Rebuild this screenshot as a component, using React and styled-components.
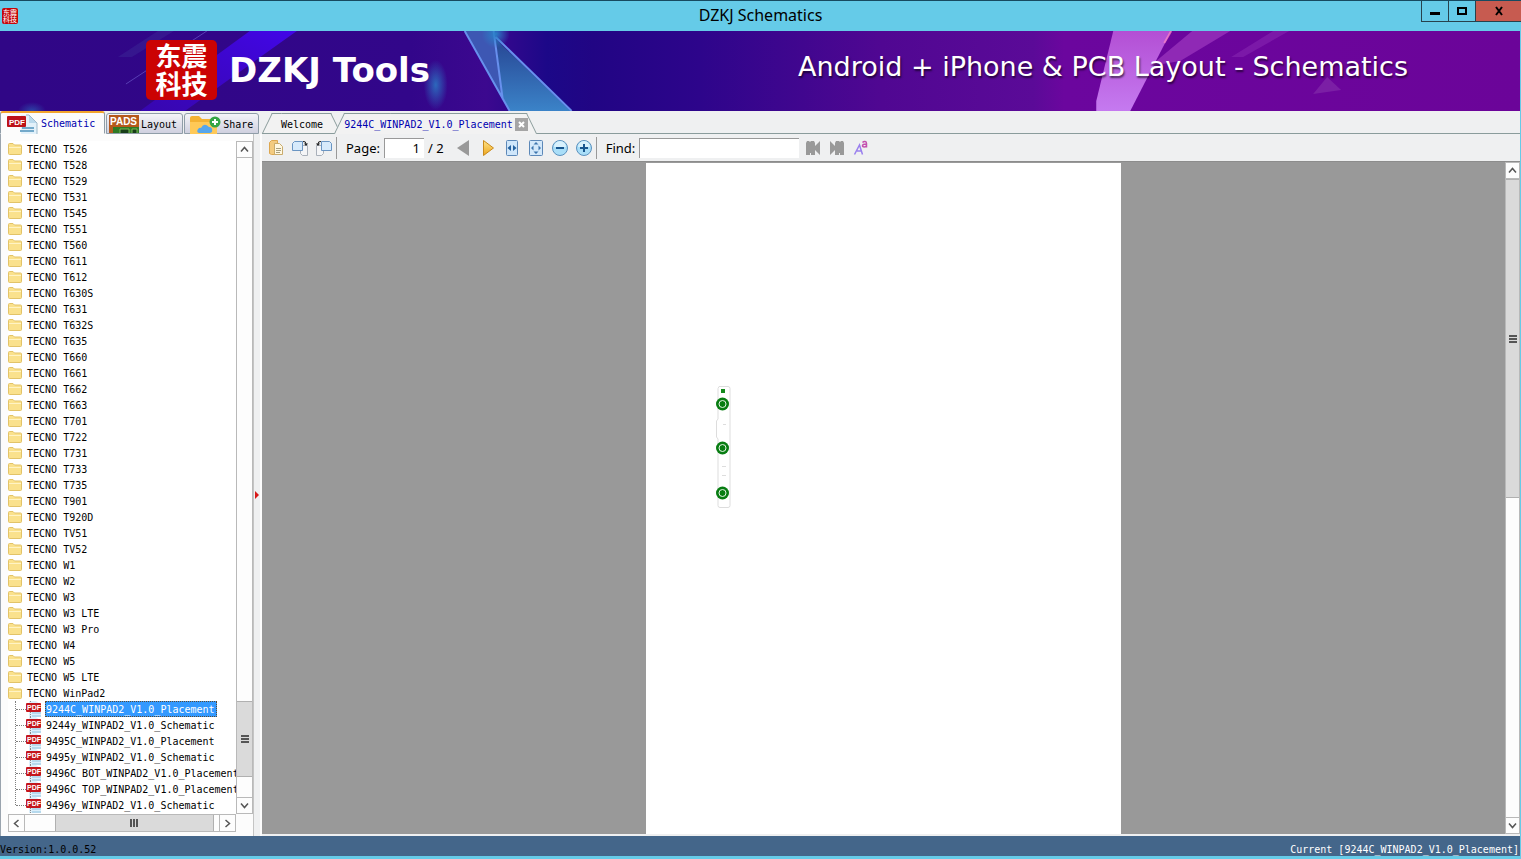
import React from "react"
import styled, { createGlobalStyle } from "styled-components"

const folders = [
  "T526", "T528", "T529", "T531", "T545", "T551", "T560", "T611", "T612",
  "T630S", "T631", "T632S", "T635", "T660", "T661", "T662", "T663", "T701",
  "T722", "T731", "T733", "T735", "T901", "T920D", "TV51", "TV52", "W1", "W2",
  "W3", "W3 LTE", "W3 Pro", "W4", "W5", "W5 LTE", "WinPad2",
]

const files = [
  "9244C_WINPAD2_V1.0_Placement",
  "9244y_WINPAD2_V1.0_Schematic",
  "9495C_WINPAD2_V1.0_Placement",
  "9495y_WINPAD2_V1.0_Schematic",
  "9496C BOT_WINPAD2_V1.0_Placement",
  "9496C TOP_WINPAD2_V1.0_Placement",
  "9496y_WINPAD2_V1.0_Schematic",
]

const current = files[0]

const App = () => (
  <>
    <GlobalStyle />
    <Window>
      <TitleBar>
        <AppIcon>
          <span>东震</span>
          <span>科技</span>
        </AppIcon>
        <WindowTitle>DZKJ Schematics</WindowTitle>
        <WindowControls>
          <ControlButton aria-label="Minimize">
            <svg width="12" height="10">
              <rect x="1" y="6" width="10" height="3" />
            </svg>
          </ControlButton>
          <ControlButton aria-label="Maximize">
            <svg width="12" height="10">
              <path d="M2 2h8v6H2z" fill="none" stroke="#000" strokeWidth="2" />
            </svg>
          </ControlButton>
          <ControlButton aria-label="Close" $close>
            <svg width="10" height="10">
              <path d="M2 1l6 8M8 1L2 9" stroke="#000" strokeWidth="2" />
            </svg>
          </ControlButton>
        </WindowControls>
      </TitleBar>
      <Frame>
        <Banner>
          <BannerArt />
          <Logo>
            <span>东震</span>
            <span>科技</span>
          </Logo>
          <Brand>DZKJ Tools</Brand>
          <Slogan>Android + iPhone &amp; PCB Layout - Schematics</Slogan>
        </Banner>
        <Main>
          <Sidebar />
          <Viewer />
        </Main>
        <StatusBar>
          <Version>Version:1.0.0.52</Version>
          <span>Current [{current}]</span>
        </StatusBar>
      </Frame>
    </Window>
  </>
)

export default App

const Sidebar = () => (
  <SidePanel>
    <SideTabs>
      <SideTab $active>
        <PdfTabIcon />
        Schematic
      </SideTab>
      <SideTab>
        <PadsIcon />
        Layout
      </SideTab>
      <SideTab>
        <ShareIcon />
        Share
      </SideTab>
    </SideTabs>
    <SideBody>
      <TreeArea>
        <Tree>
          {folders.map(name => (
            <FolderRow key={name}>
              <FolderIcon />
              TECNO {name}
            </FolderRow>
          ))}
          <FileList>
            {files.map(name => (
              <FileRow key={name}>
                <PdfIcon />
                <FileName $selected={name === current}>{name}</FileName>
              </FileRow>
            ))}
          </FileList>
          <FolderRow>
            <FolderIcon />
          </FolderRow>
        </Tree>
        <ScrollBar before={547} thumb={75} after={20} />
        <ScrollBar horizontal before={30} thumb={160} after={5} />
      </TreeArea>
      <Splitter>
        <svg width="5" height="8">
          <path d="M1 0l4 4-4 4z" fill="#d81818" />
        </svg>
      </Splitter>
    </SideBody>
  </SidePanel>
)

const Viewer = () => (
  <ViewerPanel>
    <DocTabs>
      <DocTab>Welcome</DocTab>
      <DocTab $active>
        {current}
        <CloseTab aria-label="Close tab">
          <svg width="7" height="7">
            <path d="M1 1l5 5M6 1L1 6" stroke="#fff" strokeWidth="2" />
          </svg>
        </CloseTab>
      </DocTab>
    </DocTabs>
    <Toolbar>
      <Tool aria-label="Open">
        <svg width="16" height="16">
          <path d="M1.500 2.500l2-2H9.500v14h-6l-2-1z" fill="#f3cb80" stroke="#dda750" />
          <path d="M6.500 3.500h5l3 3v8h-8z" fill="#fff8e2" stroke="#c9ab6c" />
          <path d="M8 8.500h5M8 10.500h5M8 12.500h4" stroke="#a8a080" />
        </svg>
      </Tool>
      <Tool aria-label="Rotate right">
        <RotateIcon />
      </Tool>
      <Tool aria-label="Rotate left">
        <RotateIcon flip />
      </Tool>
      <Separator />
      <Label htmlFor="page">Page:</Label>
      <PageInput id="page" defaultValue="1" />
      <PageCount>/ 2</PageCount>
      <Tool aria-label="Previous page">
        <svg width="14" height="16">
          <path d="M12 0v16L0 8z" fill="#999" />
        </svg>
      </Tool>
      <Tool aria-label="Next page">
        <svg width="14" height="16">
          <path d="M2.500 .5v15l10-7.500z" fill="url(#gold)" stroke="#c98a1c" />
          <defs>
            <linearGradient id="gold" x2="0" y2="1">
              <stop stopColor="#ffe58a" />
              <stop offset="1" stopColor="#eca51d" />
            </linearGradient>
          </defs>
        </svg>
      </Tool>
      <Tool aria-label="Fit width">
        <svg width="14" height="16">
          <rect x="1.500" y=".5" width="11" height="15" rx="1" fill="#cfe6fa" stroke="#5c88b8" />
          <path d="M6 5v6L2.500 8zM8 5v6l3.500-3z" fill="#25629f" />
        </svg>
      </Tool>
      <Tool aria-label="Fit page">
        <svg width="14" height="16">
          <rect x=".5" y=".5" width="13" height="15" rx="1" fill="#d3e8fa" stroke="#5c88b8" />
          <path d="M7 2l2.500 2.500h-5zM7 14l2.500-2.500h-5zM2 8l2.500-2.500v5zM12 8L9.500 5.500v5z" fill="#3d75ad" />
        </svg>
      </Tool>
      <Tool aria-label="Zoom out">
        <ZoomIcon d="M4 8h8" />
      </Tool>
      <Tool aria-label="Zoom in">
        <ZoomIcon d="M4 8h8M8 4v8" />
      </Tool>
      <Separator />
      <Label htmlFor="find">Find:</Label>
      <FindInput id="find" />
      <Tool aria-label="Find previous">
        <BinocularIcon />
      </Tool>
      <Tool aria-label="Find next">
        <BinocularIcon flip />
      </Tool>
      <Tool aria-label="Match case">
        <svg width="16" height="16">
          <path d="M1.500 14.500L6.500 5l3 9.500M4 11h5" fill="none" stroke="#9a80ee" strokeWidth="1.500" />
          <path d="M9.500 2.500C11 1 13.500 1.200 13.500 3.500v4M13.500 4c-2 0-4 0-4 1.700s3 1.600 4 0" fill="none" stroke="#c44fae" strokeWidth="1.500" />
        </svg>
      </Tool>
    </Toolbar>
    <Canvas>
      <Desk>
        <Page>
          <Board />
        </Page>
      </Desk>
      <ScrollBar slim before={0} thumb={320} after={322} />
    </Canvas>
  </ViewerPanel>
)

const ScrollBar = ({ horizontal, slim, before, thumb, after }) => (
  <Bar $horizontal={horizontal} $slim={slim}>
    <Arrow $horizontal={horizontal} aria-label={horizontal ? "Scroll left" : "Scroll up"}>
      <svg width="9" height="9">
        <path d={horizontal ? "M6.500 1l-4 3.500 4 3.500" : "M1 6.500l3.500-4 3.500 4"} />
      </svg>
    </Arrow>
    <Gap $size={before} />
    <Thumb $size={thumb} $horizontal={horizontal}>
      <svg width="8" height="8">
        <path d={horizontal ? "M1 0v8M4 0v8M7 0v8" : "M0 1h8M0 4h8M0 7h8"} stroke="#555" strokeWidth="2" />
      </svg>
    </Thumb>
    <Gap $size={after} />
    <Arrow $horizontal={horizontal} $end aria-label={horizontal ? "Scroll right" : "Scroll down"}>
      <svg width="9" height="9">
        <path d={horizontal ? "M2.500 1l4 3.500-4 3.500" : "M1 2.500l3.500 4 3.500-4"} />
      </svg>
    </Arrow>
  </Bar>
)

const BannerArt = () => (
  <Art viewBox="0 0 1521 80" preserveAspectRatio="none" aria-hidden="true">
    <defs>
      <linearGradient id="base">
        <stop stopColor="#300686" />
        <stop offset=".27" stopColor="#32068a" />
        <stop offset=".32" stopColor="#3c088f" />
        <stop offset=".36" stopColor="#1c0888" />
        <stop offset=".39" stopColor="#210584" />
        <stop offset=".46" stopColor="#2d058b" />
        <stop offset=".58" stopColor="#500792" />
        <stop offset=".68" stopColor="#5b0a98" />
        <stop offset=".7" stopColor="#6b069e" />
        <stop offset="1" stopColor="#6b0499" />
      </linearGradient>
      <linearGradient id="beam" x1="1" y1="0" x2="0" y2="1">
        <stop stopColor="#4206e8" />
        <stop offset="1" stopColor="#3a06c0" stopOpacity=".7" />
      </linearGradient>
      <linearGradient id="shard" x2="0" y2="1">
        <stop stopColor="#274694" />
        <stop offset="1" stopColor="#3b83c8" />
      </linearGradient>
      <linearGradient id="pink" x2="0" y2="1">
        <stop stopColor="#b34fd4" />
        <stop offset="1" stopColor="#c57af0" />
      </linearGradient>
      <radialGradient id="glow">
        <stop stopColor="#2a80c8" />
        <stop offset="1" stopColor="#2a80c8" stopOpacity="0" />
      </radialGradient>
    </defs>
    <rect width="1521" height="80" fill="url(#base)" />
    <path d="M250 0h47L185 80h-45z" fill="url(#beam)" />
    <path d="M158 0h16l-42 26h-14z" fill="#433da0" opacity=".3" />
    <path d="M207 0L126 53" stroke="#6a56c8" opacity=".7" />
    <ellipse cx="32" cy="80" rx="14" ry="9" fill="url(#glow)" opacity=".5" />
    <ellipse cx="436" cy="54" rx="12" ry="25" fill="url(#glow)" opacity=".8" />
    <path d="M465 0h29l9 68z" fill="#3d57b3" />
    <path d="M496 8l75 72h-61l-7-12z" fill="url(#shard)" />
    <path d="M465 0l45 80M494 0l9 68M496 6l76 74" fill="none" stroke="#6790ed" strokeWidth="2" />
    <circle cx="496" cy="3" r="14" fill="url(#glow)" />
    <path d="M1114 0h58l-41 80h-34v-10z" fill="url(#pink)" />
    <path d="M1193 0h38l-50 30-30 5z" fill="#9b35bd" opacity=".75" />
    <path d="M1274 0h16l-46 26h-12z" fill="#9030b7" opacity=".45" />
    <path d="M1172 0l-7 12" stroke="#ff85c7" strokeWidth="2" opacity=".7" />
    <path d="M1328 46l14 13-28 4z" fill="#8630ac" opacity=".6" />
  </Art>
)

const FolderIcon = () => (
  <svg width="14" height="12">
    <path d="M.5 1.500q0-1 1-1h3.500l1.500 1.500h6q1 0 1 1v7.500q0 1-1 1h-11q-1 0-1-1z" fill="#fae18c" stroke="#e2c368" />
    <path d="M1 4h12v1H1z" fill="#fff3c4" />
  </svg>
)

const PdfIcon = () => (
  <svg width="16" height="16">
    <path d="M3 0h7l5 4v12H3z" fill="#dceffb" />
    <path d="M6 12h9M6 15h9" stroke="#8fc3df" />
    <path d="M4.500 0v2M4.500 11v5" stroke="#888" strokeDasharray="1 1" />
    <rect y="2" width="15" height="9" rx="1" fill="#c4161c" />
    <text x="1" y="9" fontSize="7" fontWeight="bold" fill="#fff" fontFamily="Liberation Sans, sans-serif">PDF</text>
  </svg>
)

const PdfTabIcon = () => (
  <svg width="32" height="20">
    <path d="M14 1h8l8 8v11H14z" fill="#e2f1fa" />
    <path d="M22 1v8h8z" fill="#b9d9ec" />
    <path d="M19 1h3l8 8v11" fill="none" stroke="#9db9cb" />
    <path d="M15 14h12M13 17h14" stroke="#73a9ca" strokeWidth="2" />
    <rect y="2" width="19" height="11" rx="1" fill="#bd1218" />
    <text x="2" y="11" fontSize="8" fontWeight="bold" fill="#fff" fontFamily="Liberation Sans, sans-serif">PDF</text>
  </svg>
)

const PadsIcon = () => (
  <svg width="30" height="18">
    <rect width="30" height="18" fill="#b5591c" />
    <text x="1" y="10" fontSize="10" fontWeight="bold" fill="#fff" fontFamily="Liberation Sans, sans-serif">PADS</text>
    <rect x="4" y="12" width="26" height="6" fill="#2f7a25" />
    <path d="M11 18v-4h9v4M23 18v-4h5v4" fill="#173d18" stroke="#79b955" />
  </svg>
)

const ShareIcon = () => (
  <svg width="34" height="19">
    <path d="M3 3q0-2 2-2h7l3 3h13q2 0 2 2v13H3z" fill="#f4b233" />
    <path d="M3 7h27v12H3z" fill="#ffc957" />
    <path d="M12 18q-3-1-1-4 2-2 3-1 3-6 8-1 4 0 3 5l-2 1z" fill="#57a6ec" />
    <circle cx="28" cy="7" r="5.500" fill="#35a544" />
    <path d="M28 4v6M25 7h6" stroke="#fff" strokeWidth="2" />
  </svg>
)

const RotateIcon = ({ flip }) => (
  <svg width="16" height="16">
    <g transform={flip ? "translate(16 0) scale(-1 1)" : undefined}>
      <path d="M8.500 5.500h7v10h-5l-2-2z" fill="#f4f5f7" stroke="#a9b0ba" />
      <path d="M.5 3.500l2-2h8v9H.5z" fill="#d7eafb" stroke="#6a95c3" />
      <path d="M11 1.500q3-.5 3 2.500" fill="none" stroke="#222" />
      <path d="M12 3.500h4l-2 2.500z" fill="#222" />
    </g>
  </svg>
)

const ZoomIcon = ({ d }) => (
  <svg width="16" height="16">
    <circle cx="8" cy="8" r="7.500" fill="#a9def8" stroke="#5b91be" />
    <path d="M2 7a6 6 0 0 1 12 0z" fill="#d8f1fd" />
    <path d={d} stroke="#17568f" strokeWidth="2" />
  </svg>
)

const BinocularIcon = ({ flip }) => (
  <svg width="16" height="16">
    <g transform={flip ? "translate(16 0) scale(-1 1)" : undefined} fill="#999">
      <path d="M1 3l1-2h2l1 1 1-1h3l1 2v3l5-5v14l-5-5v5H6v-2H5v2H1z" />
    </g>
  </svg>
)

const Board = () => (
  <svg width="15" height="123">
    <path d="M3 .5h9q2 0 2 2v117q0 2-2 2H4q-2 0-2-2V53L.5 51V35L2 33V2.500z" fill="none" stroke="#ddd" />
    <rect x="5" y="3" width="4" height="4" fill="#138a1c" />
    <path d="M7 38.500h3M6 80.500h4M6 89.500h4" stroke="#ddd" />
    {[18, 62, 107].map(y => (
      <g key={y}>
        <circle cx="6.500" cy={y} r="6.500" fill="#087d12" />
        <circle cx="6.500" cy={y} r="3.500" fill="none" stroke="#e6f5e6" />
      </g>
    ))}
  </svg>
)

const GlobalStyle = createGlobalStyle`
  * {
    box-sizing: border-box;
  }

  body {
    margin: 0;
    font-family: "DejaVu Sans Mono", monospace;
    font-size: 10px;
    color: #000;
  }

  button,
  input {
    margin: 0;
    padding: 0;
    border: 0;
    background: none;
    font: inherit;
    color: inherit;
  }

  svg {
    display: block;
    flex: none;
  }
`

const Window = styled.div`
  display: flex;
  flex-direction: column;
  height: 100vh;
  background: #65cbe8;
`

const TitleBar = styled.header`
  display: grid;
  grid-template-columns: 1fr auto 1fr;
  align-items: center;
  height: 31px;
  border-top: 1px solid #174a60;
`

const AppIcon = styled.div`
  display: flex;
  flex-direction: column;
  justify-content: center;
  width: 16px;
  height: 16px;
  margin-left: 2px;
  border-radius: 2px;
  background: #c4060a;
  color: #fff;
  font: 7px/7px "Noto Sans CJK SC", sans-serif;
  text-align: center;
`

const WindowTitle = styled.h1`
  margin: 0;
  padding-bottom: 2px;
  font: 16px/20px "Noto Sans", sans-serif;
`

const WindowControls = styled.div`
  display: flex;
  align-self: start;
  justify-content: flex-end;
`

const ControlButton = styled.button`
  display: flex;
  align-items: center;
  justify-content: center;
  width: ${({ $close }) => ($close ? 46 : 27)}px;
  height: 21px;
  border: solid #27424d;
  border-width: 0 0 1px 1px;
  background: ${({ $close }) => ($close ? "#c75b50" : "transparent")};
`

const Frame = styled.div`
  display: flex;
  flex: 1;
  flex-direction: column;
  min-height: 0;
  margin: 0 1px 3px 0;
`

const Banner = styled.div`
  position: relative;
  display: flex;
  align-items: center;
  height: 80px;
  padding: 0 112px 2px 146px;
  overflow: hidden;
  color: #fff;

  > * {
    position: relative;
  }
`

const Art = styled.svg`
  && {
    position: absolute;
    inset: 0;
    width: 100%;
    height: 100%;
  }
`

const Logo = styled.div`
  display: flex;
  flex-direction: column;
  width: 71px;
  height: 60px;
  padding-top: 1px;
  border-radius: 5px;
  background: #cb0303;
  font: bold 26px/28px "Noto Sans CJK SC", sans-serif;
  text-align: center;
`

const Brand = styled.div`
  margin-left: 12px;
  font: bold 34px/40px "DejaVu Sans", sans-serif;
  white-space: nowrap;
`

const Slogan = styled.div`
  margin-left: auto;
  padding-bottom: 6px;
  font: 27px/36px "DejaVu Sans", sans-serif;
  text-shadow: 1px 2px 2px rgba(0, 0, 0, 0.6);
  white-space: nowrap;
`

const Main = styled.main`
  display: flex;
  flex: 1;
  min-height: 0;
  background: #eff0f1;
`

const SidePanel = styled.aside`
  display: flex;
  flex: none;
  flex-direction: column;
  width: 262px;
`

const SideTabs = styled.nav`
  display: flex;
  align-items: flex-end;
  gap: 1px;
  height: 23px;
`

const SideTab = styled.button`
  display: flex;
  align-items: center;
  gap: 2px;
  height: ${({ $active }) => ($active ? 23 : 21)}px;
  padding: 1px 5px 0 2px;
  border: 1px solid #8f9da8;
  border-bottom-color: ${({ $active }) => ($active ? "#fcfcfc" : "#8f9da8")};
  border-radius: 3px 3px 0 0;
  background: ${({ $active }) => ($active ? "#fcfcfc" : "linear-gradient(#f4f4f8, #cfd0df)")};
  ${({ $active }) =>
    $active &&
    `
    width: 105px;
    padding-left: 6px;
    border-top: 2px solid #f2a42c;
    color: #0000b0;
  `}
`

const SideBody = styled.div`
  display: flex;
  flex: 1;
  min-height: 0;
  border-left: 1px solid #9aa4ae;
  background: #fcfcfc;
`

const TreeArea = styled.div`
  display: grid;
  flex: 1;
  grid-template: minmax(0, 1fr) 18px / minmax(0, 1fr) 17px;
  padding: 7px 0 4px 7px;
  border-right: 1px solid #c4c4c4;
`

const Tree = styled.div`
  overflow: hidden;
  background: #fff;
`

const FolderRow = styled.div`
  display: flex;
  align-items: center;
  gap: 5px;
  height: 16px;
`

const FileList = styled.div`
  position: relative;
  padding-left: 18px;

  &::before {
    content: "";
    position: absolute;
    top: 0;
    bottom: 8px;
    left: 7px;
    border-left: 1px dotted #808080;
  }
`

const FileRow = styled.div`
  position: relative;
  display: flex;
  align-items: center;
  gap: 3px;
  height: 16px;

  &::before {
    content: "";
    position: absolute;
    top: 8px;
    left: -10px;
    width: 10px;
    border-top: 1px dotted #808080;
  }
`

const FileName = styled.span`
  flex: none;
  height: 16px;
  padding: 1px 1px 0 0;
  border: 1px dotted ${({ $selected }) => ($selected ? "#5c4a30" : "transparent")};
  background: ${({ $selected }) => ($selected ? "#3399ff" : "none")};
  color: ${({ $selected }) => ($selected ? "#fff" : "#000")};
  line-height: 14px;
  white-space: nowrap;
`

const Splitter = styled.div`
  display: flex;
  align-items: center;
  width: 8px;
  padding-top: 20px;
  border-right: 2px solid #fcfcfc;
  background: #eff0f1;
`

const Bar = styled.div`
  display: flex;
  flex-direction: ${({ $horizontal }) => ($horizontal ? "row" : "column")};
  ${({ $horizontal, $slim }) =>
    $horizontal ? "height: 18px;" : `width: ${$slim ? 15 : 17}px; flex: none;`}
  border: 1px solid #b9b9b9;
  background: #fdfdfd;
`

const Arrow = styled.button`
  display: flex;
  flex: none;
  align-items: center;
  justify-content: center;
  ${({ $horizontal }) => ($horizontal ? "width: 16px;" : "height: 16px;")}
  border: 0 solid #b9b9b9;
  ${({ $horizontal, $end }) =>
    `border-${$horizontal ? ($end ? "left" : "right") : $end ? "top" : "bottom"}-width: 1px;`}

  path {
    fill: none;
    stroke: #555;
    stroke-width: 1.5;
  }
`

const Gap = styled.div`
  flex: ${({ $size }) => $size} 0 0;
`

const Thumb = styled.div`
  display: flex;
  flex: ${({ $size }) => $size} 0 0;
  align-items: center;
  justify-content: center;
  border: solid #b0b0b0;
  border-width: ${({ $horizontal }) => ($horizontal ? "0 1px" : "1px 0")};
  background: #dadada;
`

const ViewerPanel = styled.section`
  display: flex;
  flex: 1;
  flex-direction: column;
  min-width: 0;
`

const DocTabs = styled.nav`
  display: flex;
  height: 23px;
  padding-top: 2px;
  border-bottom: 1px solid #8a9c9c;
`

const DocTab = styled.button`
  position: relative;
  z-index: 0;
  display: flex;
  align-items: center;
  gap: 2px;
  height: 20px;
  padding: 2px 18px 0 19px;
  white-space: nowrap;

  &::before,
  &::after {
    content: "";
    position: absolute;
    z-index: -1;
    top: 0;
    bottom: 0;
    border: 0 solid #8a9c9c;
    border-top-width: 1px;
    background: #f2f2f2;
  }

  &::before {
    left: 5px;
    right: 30%;
    border-left-width: 1px;
    transform: skewX(-26deg);
  }

  &::after {
    left: 30%;
    right: 5px;
    border-right-width: 1px;
    transform: skewX(26deg);
  }

  ${({ $active }) =>
    $active &&
    `
    z-index: 1;
    height: 21px;
    margin-left: -7px;
    padding: 2px 9px 0 10px;
    color: #0000b0;
  `}
`

const CloseTab = styled.span`
  display: flex;
  align-items: center;
  justify-content: center;
  width: 13px;
  height: 13px;
  background: #a5a5a5;
`

const Toolbar = styled.div`
  display: flex;
  align-items: center;
  height: 28px;
  padding-left: 2px;
  border-bottom: 1px solid #8c8c8c;
  font: 13px/20px "Noto Sans", sans-serif;
`

const Tool = styled.button`
  display: flex;
  align-items: center;
  justify-content: center;
  width: 24px;
  height: 24px;
`

const Separator = styled.div`
  width: 1px;
  height: 22px;
  margin-right: 9px;
  background: #999;
`

const Label = styled.label`
  flex: none;
`

const PageInput = styled.input`
  width: 40px;
  height: 20px;
  margin-left: 4px;
  padding-right: 4px;
  border: solid #999;
  border-width: 1px 0 0 1px;
  background: #fff;
  text-align: right;
`

const PageCount = styled.span`
  margin: 0 8px 0 4px;
`

const FindInput = styled.input`
  width: 160px;
  height: 20px;
  margin: 0 2px 0 4px;
  border: solid #999;
  border-width: 1px 0 0 1px;
  background: #fff;
`

const Canvas = styled.div`
  display: flex;
  flex: 1;
  min-height: 0;
  margin-bottom: 2px;
`

const Desk = styled.div`
  display: flex;
  flex: 1;
  justify-content: center;
  min-width: 0;
  padding-top: 1px;
  background: #999;
`

const Page = styled.div`
  width: 475px;
  padding: 223px 70px 0;
  background: #fff;
`

const StatusBar = styled.footer`
  display: flex;
  align-items: flex-end;
  justify-content: space-between;
  height: 20px;
  padding: 0 1px 0 0;
  background: #44668a;
  color: #fff;
  line-height: 13px;
`

const Version = styled.span`
  color: #000;
`
